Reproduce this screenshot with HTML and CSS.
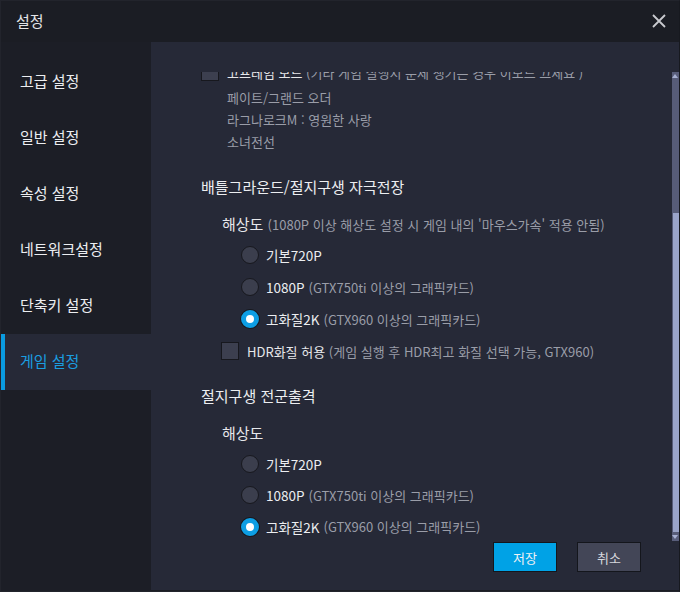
FILE: index.html
```html
<!DOCTYPE html>
<html lang="ko">
<head>
	<meta charset="UTF-8">
	<title>설정</title>
	<link rel="stylesheet" href="styles.css">
</head>
<body>
	<div class="window">
		<div class="titlebar">
			<span class="title">설정</span>
			<svg class="close" width="14" height="14" viewBox="0 0 14 14">
				<path d="M1 1 L13 13 M13 1 L1 13" stroke="#c9cacf" stroke-width="1.8" fill="none"/>
			</svg>
		</div>
		<div class="main">
			<ul class="sidebar">
				<li>고급 설정</li>
				<li>일반 설정</li>
				<li>속성 설정</li>
				<li>네트워크설정</li>
				<li>단축키 설정</li>
				<li class="active">게임 설정</li>
			</ul>
			<div class="panel">
				<div class="scroll">
					<div class="scroll-inner">
						<div class="check-row top">
							<span class="checkbox"></span>
							<span class="label">고프레임 모드 <span class="note">(기타 게임 실행시 문제 생기는 경우 이모드 끄세요 )</span></span>
						</div>
						<ul class="games">
							<li>페이트/그랜드 오더</li>
							<li>라그나로크M : 영원한 사랑</li>
							<li>소녀전선</li>
						</ul>

						<h2 class="section first">배틀그라운드/절지구생 자극전장</h2>
						<div class="sub">해상도 <span class="note">(1080P 이상 해상도 설정 시 게임 내의 '마우스가속' 적용 안됨)</span></div>
						<div class="radio-row"><span class="radio"></span>기본720P</div>
						<div class="radio-row"><span class="radio"></span>1080P <span class="note">(GTX750ti 이상의 그래픽카드)</span></div>
						<div class="radio-row"><span class="radio on"></span>고화질2K <span class="note">(GTX960 이상의 그래픽카드)</span></div>
						<div class="check-row hdr">
							<span class="checkbox"></span>
							<span class="label">HDR화질 허용 <span class="note">(게임 실행 후 HDR최고 화질 선택 가능, GTX960)</span></span>
						</div>

						<h2 class="section">절지구생 전군출격</h2>
						<div class="sub">해상도</div>
						<div class="radio-row"><span class="radio"></span>기본720P</div>
						<div class="radio-row"><span class="radio"></span>1080P <span class="note">(GTX750ti 이상의 그래픽카드)</span></div>
						<div class="radio-row"><span class="radio on"></span>고화질2K <span class="note">(GTX960 이상의 그래픽카드)</span></div>
					</div>
					<div class="scrollbar">
						<div class="arrow up"></div>
						<div class="track"><div class="thumb"></div></div>
						<div class="arrow down"></div>
					</div>
				</div>
				<div class="footer">
					<button class="btn save">저장</button>
					<button class="btn cancel">취소</button>
				</div>
			</div>
		</div>
	</div>
</body>
</html>
```

FILE: styles.css
```css
html, body {
	margin: 0;
	padding: 0;
	background-color: #1b1d24;
}
body {
	font-family: "Noto Sans CJK KR", "Noto Sans", sans-serif;
	color: #e6e7ea;
}
.window {
	width: 680px;
	height: 592px;
	box-sizing: border-box;
	border: 1px solid #22242c;
	border-right-color: #17191f;
	background-color: #1b1d24;
	display: flex;
	flex-direction: column;
}
.titlebar {
	height: 41px;
	display: flex;
	align-items: center;
	justify-content: space-between;
	padding: 0 13px 0 15px;
	flex-shrink: 0;
}
.title {
	font-size: 15px;
	color: #e4e5e8;
	margin-top: -2px;
}
.close {
	margin-top: -2px;
}
.main {
	flex: 1;
	display: flex;
	min-height: 0;
}

/* left menu */
.sidebar {
	list-style: none;
	margin: 0;
	padding: 12px 0 0 0;
	width: 150px;
	background-color: #1c1e26;
	flex-shrink: 0;
}
.sidebar li {
	height: 56px;
	line-height: 54px;
	padding-left: 19px;
	font-size: 15px;
	color: #eceef1;
	box-sizing: border-box;
}
.sidebar li.active {
	background-color: #262937;
	border-left: 4px solid #0a9be0;
	padding-left: 15px;
	color: #1a9ee0;
}

/* right panel */
.panel {
	flex: 1;
	background-color: #262937;
	display: flex;
	flex-direction: column;
	margin-bottom: 1px;
}
.scroll {
	margin-top: 30px;
	height: 469px;
	display: flex;
	overflow: hidden;
}
.scroll-inner {
	flex: 1;
	margin-top: -11px;
	font-size: 13px;
}
.note {
	color: #9a9da8;
	font-size: 13px;
}

.check-row {
	display: flex;
	align-items: center;
	height: 22px;
}
.check-row.top {
	padding-left: 50px;
	margin-bottom: 4px;
}
.check-row.top .label {
	margin-left: 8px;
}
.check-row.hdr {
	height: 32px;
	padding-left: 70px;
}
.check-row.hdr .label {
	margin-left: 8px;
}
.checkbox {
	width: 16px;
	height: 16px;
	background-color: #3c3f4f;
	border: 1px solid #17181e;
	flex-shrink: 0;
}
.label {
	font-size: 13px;
	color: #e6e7ea;
}

.games {
	list-style: none;
	margin: 0;
	padding: 0 0 0 76px;
}
.games li {
	height: 22px;
	line-height: 22px;
	color: #9a9da8;
	font-size: 13px;
}

.section {
	margin: 23px 0 0 0;
	padding-left: 50px;
	height: 22px;
	line-height: 22px;
	font-size: 15px;
	font-weight: normal;
	color: #eceef1;
}
.section + .sub {
	margin-top: 15px;
}
.section:not(.first) {
	margin-top: 18px;
}
.sub {
	padding-left: 71px;
	height: 22px;
	line-height: 22px;
	font-size: 15px;
	margin-bottom: 4px;
}

.radio-row {
	height: 32px;
	display: flex;
	align-items: center;
	padding-left: 90px;
	font-size: 13.5px;
	color: #eceef1;
}
.radio-row .note {
	margin-left: 4px;
}
.radio {
	width: 16px;
	height: 16px;
	border-radius: 50%;
	background-color: #3b3e4d;
	border: 1px solid #17181e;
	margin-right: 7px;
	flex-shrink: 0;
	box-sizing: content-box;
}
.radio.on {
	background-color: #fff;
	border: 5px solid #0d9ee4;
	width: 8px;
	height: 8px;
	box-shadow: 0 0 0 1px #17181e;
}
.section:not(.first) ~ .radio-row {
	height: 31.5px;
}

/* scrollbar */
.scrollbar {
	width: 7px;
	display: flex;
	flex-direction: column;
	background-color: #575c78;
	flex-shrink: 0;
}
.arrow {
	height: 7px;
	background-color: #595e7b;
	position: relative;
}
.arrow.up::after, .arrow.down::after {
	content: "";
	position: absolute;
	left: 0;
	border-left: 3.5px solid transparent;
	border-right: 3.5px solid transparent;
}
.arrow.up::after {
	top: 2px;
	border-bottom: 4px solid #a7b0d2;
}
.arrow.down::after {
	top: 1px;
	border-top: 4px solid #a7b0d2;
}
.track {
	flex: 1;
	display: flex;
	flex-direction: column;
	justify-content: flex-end;
	padding: 0 0 2px 1px;
}
.thumb {
	height: 319px;
	background-color: #9aa4c9;
}

/* footer */
.footer {
	flex: 1;
	display: flex;
	justify-content: flex-end;
	align-items: flex-start;
	gap: 20px;
	padding: 1px 38px 0 0;
}
.btn {
	width: 64px;
	height: 30px;
	border: 1px solid #14161c;
	font-family: "Noto Sans CJK KR", sans-serif;
	font-size: 13px;
	color: #f0f1f4;
	cursor: pointer;
}
.btn.save {
	background-color: #00a2e6;
}
.btn.cancel {
	background-color: #434657;
	color: #d6d8de;
}
```
